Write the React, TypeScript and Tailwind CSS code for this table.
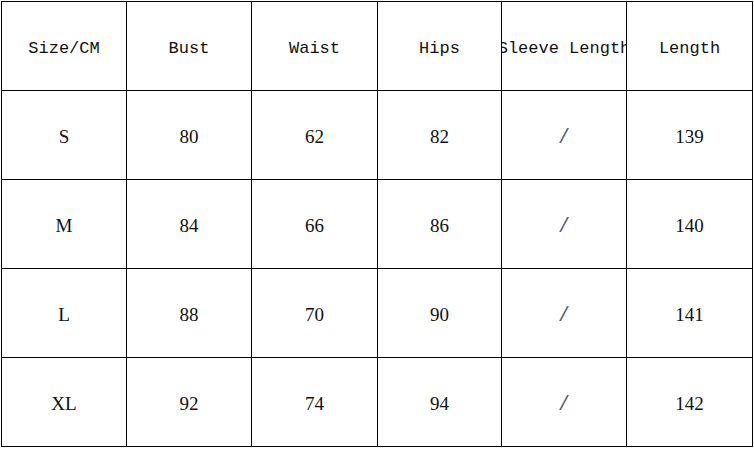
import React from 'react';

const headers = ['Size/CM', 'Bust', 'Waist', 'Hips', 'Sleeve Length', 'Length'];

const rows = [
  ['S', '80', '62', '82', '/', '139'],
  ['M', '84', '66', '86', '/', '140'],
  ['L', '88', '70', '90', '/', '141'],
  ['XL', '92', '74', '94', '/', '142'],
];

export default function App() {
  return (
    <div className="w-[754px] h-[451px] bg-white pl-[1px] pt-[1px]">
      <div className="grid grid-cols-[125px_125px_126px_124px_125px_126px] grid-rows-[89px_89px_89px_89px_89px] w-fit border-l border-t border-black">
        {headers.map((h) => (
          <div
            key={h}
            className="flex items-center justify-center overflow-hidden whitespace-nowrap border-r border-b border-black text-[17px] text-[#111] font-['Liberation_Mono',monospace] pt-[5px]"
          >
            {h}
          </div>
        ))}
        {rows.map((r) =>
          r.map((c, i) => (
            <div
              key={r[0] + i}
              className={`flex items-center justify-center border-r border-b border-black pt-[5px] ${
                c === '/'
                  ? "text-[#5a5f70] text-[20px] font-['Liberation_Mono',monospace]"
                  : "text-[#111] text-[19px] font-['Liberation_Serif',serif]"
              }`}
            >
              {c}
            </div>
          ))
        )}
      </div>
    </div>
  );
}
